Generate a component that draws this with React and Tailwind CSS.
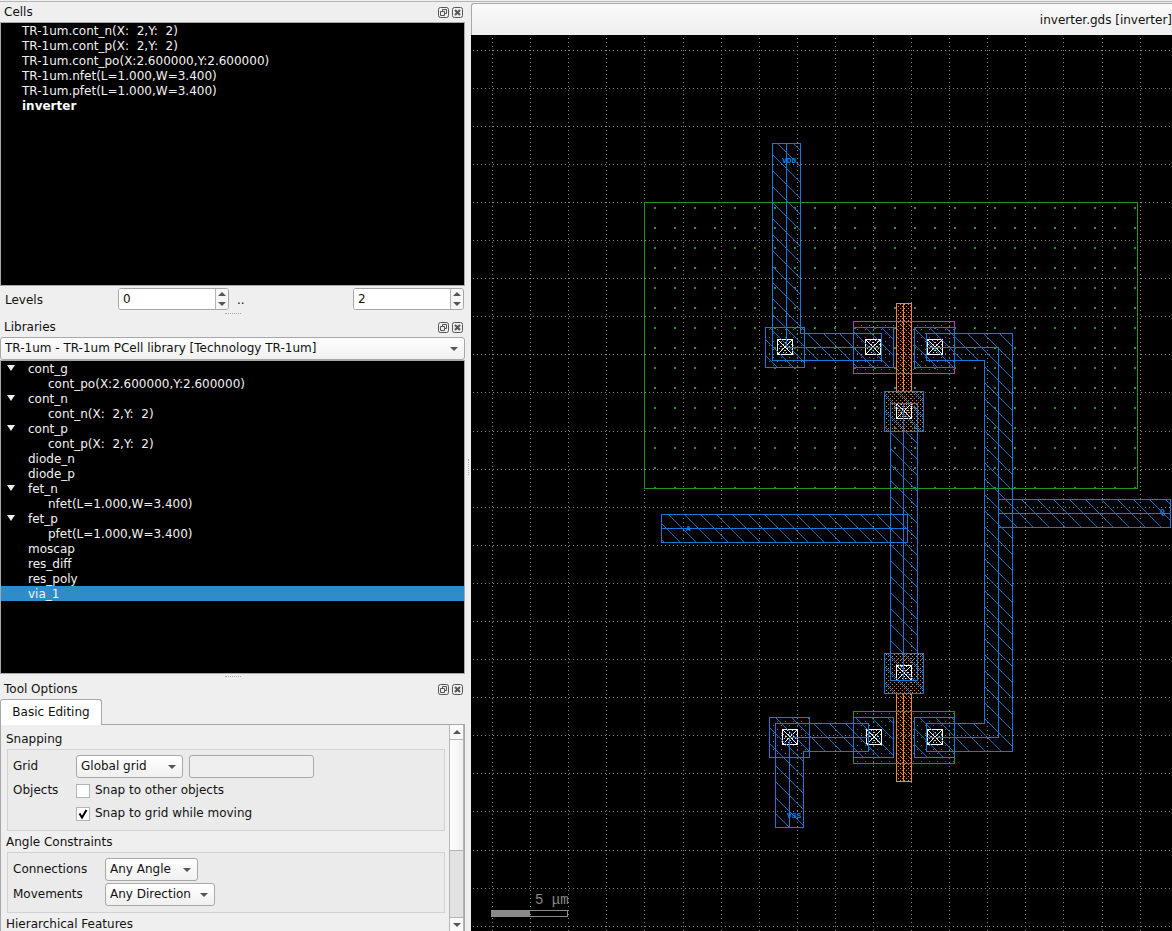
import React from "react";

const cells = [
  "TR-1um.cont_n(X:  2,Y:  2)",
  "TR-1um.cont_p(X:  2,Y:  2)",
  "TR-1um.cont_po(X:2.600000,Y:2.600000)",
  "TR-1um.nfet(L=1.000,W=3.400)",
  "TR-1um.pfet(L=1.000,W=3.400)",
];

const library = [
  { name: "cont_g", variants: ["cont_po(X:2.600000,Y:2.600000)"] },
  { name: "cont_n", variants: ["cont_n(X:  2,Y:  2)"] },
  { name: "cont_p", variants: ["cont_p(X:  2,Y:  2)"] },
  { name: "diode_n" },
  { name: "diode_p" },
  { name: "fet_n", variants: ["nfet(L=1.000,W=3.400)"] },
  { name: "fet_p", variants: ["pfet(L=1.000,W=3.400)"] },
  { name: "moscap" },
  { name: "res_diff" },
  { name: "res_poly" },
  { name: "via_1", selected: true },
];

function DockTitle({ children }) {
  return (
    <div className="flex h-5 shrink-0 items-center justify-between pl-1 pr-0.5">
      <h2 className="leading-4">{children}</h2>
      <div className="flex gap-[3px]">
        <button aria-label={`Float ${children}`}>
          <svg width="11" height="11" viewBox="0 0 11 11" fill="none" stroke="#555" className="block">
            <rect x="0.5" y="0.5" width="10" height="10" rx="2" />
            <path d="M4.5 4.5v-2h4v4h-2M2.5 4.5h4v4h-4z" />
          </svg>
        </button>
        <button aria-label={`Close ${children}`}>
          <svg width="11" height="11" viewBox="0 0 11 11" fill="none" stroke="#555" className="block">
            <rect x="0.5" y="0.5" width="10" height="10" rx="2" />
            <path d="M3 3l5 5M8 3l-5 5" strokeWidth="2" />
          </svg>
        </button>
      </div>
    </div>
  );
}

function Triangle({ up, className = "" }) {
  return (
    <svg width="8" height="4" viewBox="0 0 8 4" fill="#555" className={className}>
      <path d={up ? "M0 4h8L4 0z" : "M0 0h8L4 4z"} />
    </svg>
  );
}

function SpinBox({ label, value }) {
  return (
    <div className="flex h-[22px] w-[111px] overflow-hidden rounded-[3px] border border-[#a5a5a5] bg-white">
      <input aria-label={label} defaultValue={value} className="w-24 min-w-0 bg-white pl-1 outline-none" />
      <div className="flex flex-1 flex-col border-l border-[#b5b5b5] bg-[#f6f6f6]">
        <button aria-label={`Increase ${label}`} className="flex flex-1 items-center justify-center"><Triangle up /></button>
        <button aria-label={`Decrease ${label}`} className="flex flex-1 items-center justify-center"><Triangle /></button>
      </div>
    </div>
  );
}

function Combo({ label, value, className }) {
  return (
    <div className={`relative ${className}`}>
      <select
        aria-label={label}
        className="h-[23px] w-full appearance-none rounded-[3px] border border-[#a8a8a8] bg-gradient-to-b from-white to-[#f0f0f0] pl-1 outline-none"
      >
        <option>{value}</option>
      </select>
      <Triangle className="pointer-events-none absolute right-[7px] top-[10px]" />
    </div>
  );
}

function Check({ label, checked }) {
  return (
    <label className="flex h-[15px] items-center gap-[5px]">
      <span className="grid">
        <input
          type="checkbox"
          defaultChecked={checked}
          className="peer col-start-1 row-start-1 size-3.5 appearance-none border border-[#b4b4b4] bg-white"
        />
        <svg
          viewBox="0 0 14 14"
          className="pointer-events-none invisible col-start-1 row-start-1 size-3.5 peer-checked:visible"
          fill="none"
          stroke="#000"
          strokeWidth="2"
        >
          <path d="M3.5 6.5l2.5 4L10.500 3" />
        </svg>
      </span>
      {label}
    </label>
  );
}

function Handle({ className }) {
  return (
    <div className={`flex shrink-0 items-center justify-center ${className}`}>
      <div className="w-4 border-t border-dotted border-[#aaa]" />
    </div>
  );
}

const GREEN = "#219421";
const BLUE = "#1b78d8";
const HATCH = "#186cc6";
const ORANGE = "#e6864c";
const MAGENTA = "#c42cc4";

const columns = Array.from({ length: 60 }, (_, k) => Math.floor(492.57 + 38.095 * k));
const rows = Array.from({ length: 50 }, (_, k) => Math.floor(50.07 + 38.095 * k));
const diagonal = Array.from({ length: 16 }, (_, k) => k);

function Box({ x1, y1, x2, y2, color, fill }) {
  return (
    <>
      {fill && <rect x={x1} y={y1} width={x2 - x1} height={y2 - y1} fill={`url(#${fill})`} />}
      <rect x={x1 + 0.5} y={y1 + 0.5} width={x2 - x1} height={y2 - y1} fill="none" stroke={color} />
    </>
  );
}

function Wire({ outline, center }) {
  return (
    <>
      <path d={outline} fill="url(#hatch)" />
      <g transform="translate(0.5 0.5)" fill="none" stroke={BLUE}>
        <path d={outline} />
        <path d={center} />
      </g>
    </>
  );
}

function Via({ x, y }) {
  return (
    <g transform={`translate(${x} ${y})`} fill="none" stroke="#fff">
      <rect x="0.5" y="0.5" width="15" height="15" />
      <path d="M1 1l14 14M15 1l-14 14" />
      <path d="M5 1l10 10M1 5l10 10M11 1l-10 10M15 5l-10 10" strokeDasharray="1.4 1.4" opacity="0.8" />
    </g>
  );
}

function Layout() {
  return (
    <svg role="img" aria-label="Inverter layout" className="block size-full" shapeRendering="crispEdges">
      <defs>
        <pattern id="hatch" width="16" height="16" patternUnits="userSpaceOnUse">
          {diagonal.map((k) => (
            <rect key={k} x={(k + 10) % 16} y={k} width="1" height="1" fill={HATCH} />
          ))}
        </pattern>
        <pattern id="well" x="654" y="207" width="20" height="20" patternUnits="userSpaceOnUse">
          <rect width="2" height="2" fill="#358f38" />
        </pattern>
        <pattern id="poly" width="4" height="4" patternUnits="userSpaceOnUse">
          <rect width="1" height="1" fill={ORANGE} />
          <rect x="2" y="2" width="1" height="1" fill={ORANGE} />
        </pattern>
        <pattern id="polypad" width="4" height="4" patternUnits="userSpaceOnUse">
          <rect width="1" height="1" fill="#c08654" />
          <rect x="2" y="2" width="1" height="1" fill="#c08654" />
        </pattern>
        <pattern id="pdiff" width="8" height="8" patternUnits="userSpaceOnUse">
          <rect x="1" y="1" width="1" height="1" fill={MAGENTA} />
          <rect x="5" y="5" width="1" height="1" fill={MAGENTA} />
        </pattern>
        <pattern id="ndiff" width="8" height="8" patternUnits="userSpaceOnUse">
          <rect x="1" y="1" width="1" height="1" fill={GREEN} />
          <rect x="5" y="5" width="1" height="1" fill={GREEN} />
        </pattern>
      </defs>
      <g transform="translate(-471 -35)">
        <g stroke="#8a8a8a" strokeDasharray="1 3">
          {columns.map((x) => (
            <path key={x} d={`M${x + 0.5} 38V2000`} />
          ))}
          {rows.map((y) => (
            <path key={y} d={`M473 ${y + 0.5}H2800`} />
          ))}
        </g>

        <Box x1={644} y1={202} x2={1137} y2={488} color={GREEN} fill="well" />
        <Box x1={765} y1={327} x2={804} y2={367} color={BLUE} fill="ndiff" />
        <Box x1={769} y1={717} x2={809} y2={757} color={BLUE} fill="pdiff" />

        <Box x1={896} y1={303} x2={911} y2={391} color={ORANGE} fill="poly" />
        <Box x1={896} y1={693} x2={911} y2={781} color={ORANGE} fill="poly" />
        <path d="M903.5 303V391M903.5 693V781" stroke={ORANGE} />
        <Box x1={884} y1={391} x2={923} y2={431} color={BLUE} fill="polypad" />
        <Box x1={884} y1={653} x2={923} y2={693} color={BLUE} fill="polypad" />
        <Box x1={853} y1={321} x2={954} y2={373} color={MAGENTA} fill="pdiff" />
        <Box x1={853} y1={711} x2={954} y2={763} color={GREEN} fill="ndiff" />

        {[
          [765, 327, 804],
          [853, 327, 893],
          [914, 327, 954],
          [884, 391, 923],
          [884, 653, 923],
          [769, 717, 809],
          [853, 717, 893],
          [914, 717, 954],
        ].map(([x, y, x2]) => (
          <Box key={`${x}-${y}`} x1={x} y1={y} x2={x2} y2={y + 40} color={BLUE} fill="hatch" />
        ))}

        <Via x={777} y={339} />
        <Via x={865} y={339} />
        <Via x={927} y={339} />
        <Via x={896} y={403} />
        <Via x={896} y={665} />
        <Via x={782} y={729} />
        <Via x={866} y={729} />
        <Via x={927} y={729} />

        <Wire outline="M772 143H800V333H881V360H772Z" center="M786 143V347H881" />
        <Wire outline="M926 333H1012V751H926V723H984V360H926Z" center="M926 347H998V737H926" />
        <Wire outline="M890 403H917V680H890Z" center="M903 403V680" />
        <Wire outline="M661 514H907V542H661Z" center="M661 528H907" />
        <Wire outline="M998 499H1170V527H998Z" center="M998 513H1170" />
        <Wire outline="M775 723H868V751H803V827H775Z" center="M868 737H789V827" />

        <g fill="#0a80f5" fontFamily="Liberation Mono" fontSize="8" fontWeight="700">
          <text x="782" y="163">VDD</text>
          <text x="686" y="531">A</text>
          <text x="1160" y="514">Q</text>
          <text x="787" y="818">VSS</text>
        </g>

        <rect x="491" y="910" width="39" height="7" fill="#8a8a8a" />
        <rect x="491.5" y="910.5" width="76" height="6" fill="none" stroke="#8a8a8a" />
        <text x="535" y="904" fill="#8a8a8a" fontFamily="Liberation Mono" fontSize="14">5 μm</text>
      </g>
    </svg>
  );
}

export default function App() {
  return (
    <div className="flex h-screen flex-col overflow-hidden bg-[#efefef] font-['DejaVu_Sans',sans-serif] text-xs leading-[15px] text-[#111]">
      <div className="mt-px h-px shrink-0 bg-[#b4b4b4]" />
      <div className="flex min-h-0 flex-1">
        <aside className="flex w-[465px] shrink-0 flex-col">
          <DockTitle>Cells</DockTitle>
          <ul className="h-[264px] shrink-0 whitespace-pre border border-[#a8a8a8] bg-black pl-[21px] pt-px text-[#f2f2f2]">
            {cells.map((c) => (
              <li key={c}>{c}</li>
            ))}
            <li className="font-bold text-white">inverter</li>
          </ul>
          <div className="flex shrink-0 items-center pl-1 pr-px pt-0.5">
            <span className="w-[114px] pl-px pt-0.5">Levels</span>
            <SpinBox label="From level" value="0" />
            <span className="flex-1 pl-2 pt-0.5">..</span>
            <SpinBox label="To level" value="2" />
          </div>
          <Handle className="h-[7px]" />
          <DockTitle>Libraries</DockTitle>
          <Combo label="Library" value="TR-1um - TR-1um PCell library [Technology TR-1um]" className="h-[23px] w-full shrink-0" />
          <ul className="h-[314px] shrink-0 whitespace-pre border border-[#a8a8a8] bg-black leading-[17px] text-[#f2f2f2]">
            {library.map((item) => (
              <li key={item.name}>
                <div className={item.selected ? "flex h-[15px] bg-[#308cc6]" : "flex h-[15px]"}>
                  <span className="w-[27px] pl-1.5">
                    {item.variants && (
                      <svg width="8" height="6" viewBox="0 0 8 6" fill="#eee" className="mt-1">
                        <path d="M0 0h8L4 6z" />
                      </svg>
                    )}
                  </span>
                  {item.name}
                </div>
                {item.variants?.map((v) => (
                  <div key={v} className="h-[15px] pl-[47px]">{v}</div>
                ))}
              </li>
            ))}
          </ul>
          <Handle className="h-[5px]" />
          <DockTitle>Tool Options</DockTitle>
          <div className="flex shrink-0">
            <button className="h-[26px] w-[102px] rounded-t-[3px] border border-b-0 border-[#a8a8a8] bg-white">Basic Editing</button>
            <div className="flex-1 border-b border-[#a8a8a8]" />
          </div>
          <div className="flex min-h-0 flex-1 border-x border-[#a8a8a8]">
            <div className="min-w-0 flex-1 overflow-hidden pl-[5px] pr-1 pt-[7px]">
              <h3>Snapping</h3>
              <section className="ml-px mt-0.5 flex flex-col border border-[#d2d2d2] bg-[#ebebeb] px-[5px] pb-[9px] pt-[5px]">
                <div className="flex items-center">
                  <span className="w-[63px]">Grid</span>
                  <Combo label="Grid" value="Global grid" className="w-[107px]" />
                  <input aria-label="Grid value" disabled className="ml-1.5 h-[23px] w-[125px] rounded-[3px] border border-[#a8a8a8] bg-[#efefef]" />
                </div>
                <div className="mt-[5px] flex">
                  <span className="w-[63px]">Objects</span>
                  <div className="flex flex-col gap-2">
                    <Check label="Snap to other objects" />
                    <Check label="Snap to grid while moving" checked />
                  </div>
                </div>
              </section>
              <h3 className="mt-1">Angle Constraints</h3>
              <section className="ml-px mt-0.5 flex flex-col gap-0.5 border border-[#d2d2d2] bg-[#ebebeb] px-[5px] pb-1.5 pt-[5px]">
                <div className="flex items-center">
                  <span className="w-[92px]">Connections</span>
                  <Combo label="Connections" value="Any Angle" className="w-[93px]" />
                </div>
                <div className="flex items-center">
                  <span className="w-[92px]">Movements</span>
                  <Combo label="Movements" value="Any Direction" className="w-[110px]" />
                </div>
              </section>
              <h3 className="mt-1">Hierarchical Features</h3>
            </div>
            <div className="flex w-[15px] shrink-0 flex-col border-x border-[#b4b4b4] bg-[#e2e2e2]">
              <button aria-label="Scroll up" className="flex h-3.5 items-center justify-center bg-[#fafafa]"><Triangle up /></button>
              <div className="h-28 border-y border-[#b4b4b4] bg-gradient-to-r from-white to-[#f0f0f0]" />
              <div className="flex-1" />
              <button aria-label="Scroll down" className="flex h-3.5 items-center justify-center border-t border-[#b4b4b4] bg-[#fafafa]"><Triangle /></button>
            </div>
          </div>
        </aside>
        <div className="flex w-1.5 shrink-0 items-center justify-center">
          <div className="h-4 border-l border-dotted border-[#aaa]" />
        </div>
        <main className="flex min-w-0 flex-1 flex-col pt-px">
          <div className="flex h-8 shrink-0 items-center justify-end rounded-tl-[3px] border-l border-t border-[#a8a8a8] bg-gradient-to-b from-[#fafafa] to-[#eeeeee]">
            <h1 className="pt-0.5">inverter.gds [inverter]</h1>
          </div>
          <div className="min-h-0 flex-1 overflow-hidden bg-black">
            <Layout />
          </div>
        </main>
      </div>
    </div>
  );
}
